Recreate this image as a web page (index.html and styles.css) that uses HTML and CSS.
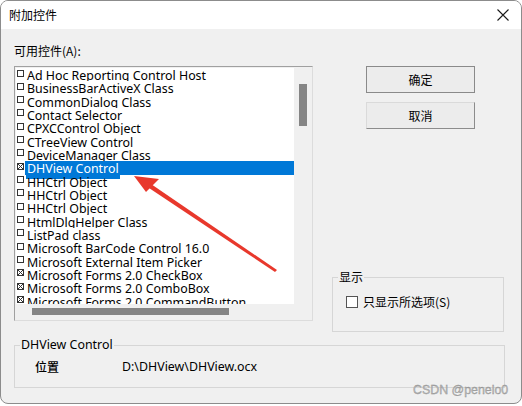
FILE: index.html
```html
<!DOCTYPE html>
<html>
<head>
<meta charset="utf-8">
<link rel="stylesheet" href="styles.css">
</head>
<body>
<div class="window">
  <div class="titlebar">
    <span class="title">附加控件</span>
    <svg class="close" width="12" height="12" viewBox="0 0 12 12"><path d="M0.5 0.5 L11.5 11.5 M11.5 0.5 L0.5 11.5" stroke="#1a1a1a" stroke-width="1.1" fill="none"/></svg>
  </div>
  <div class="content">
    <div class="top">
      <div class="left">
        <div class="caption">可用控件(A):</div>
        <div class="listbox">
          <div class="list">
            <div class="item"><span class="cb"></span><span class="txt">Ad Hoc Reporting Control Host</span></div>
            <div class="item"><span class="cb"></span><span class="txt">BusinessBarActiveX Class</span></div>
            <div class="item"><span class="cb"></span><span class="txt">CommonDialog Class</span></div>
            <div class="item"><span class="cb"></span><span class="txt">Contact Selector</span></div>
            <div class="item"><span class="cb"></span><span class="txt">CPXCControl Object</span></div>
            <div class="item"><span class="cb"></span><span class="txt">CTreeView Control</span></div>
            <div class="item"><span class="cb"></span><span class="txt">DeviceManager Class</span></div>
            <div class="item sel"><span class="cb on"></span><span class="txt">DHView Control</span></div>
            <div class="item"><span class="cb"></span><span class="txt">HHCtrl Object</span></div>
            <div class="item"><span class="cb"></span><span class="txt">HHCtrl Object</span></div>
            <div class="item"><span class="cb"></span><span class="txt">HHCtrl Object</span></div>
            <div class="item"><span class="cb"></span><span class="txt">HtmlDlgHelper Class</span></div>
            <div class="item"><span class="cb"></span><span class="txt">ListPad class</span></div>
            <div class="item"><span class="cb"></span><span class="txt">Microsoft BarCode Control 16.0</span></div>
            <div class="item"><span class="cb"></span><span class="txt">Microsoft External Item Picker</span></div>
            <div class="item"><span class="cb on"></span><span class="txt">Microsoft Forms 2.0 CheckBox</span></div>
            <div class="item"><span class="cb on"></span><span class="txt">Microsoft Forms 2.0 ComboBox</span></div>
            <div class="item"><span class="cb on"></span><span class="txt">Microsoft Forms 2.0 CommandButton</span></div>
          </div>
          <div class="vscroll"><div class="vthumb"></div></div>
          <div class="hscroll"><div class="hthumb"></div></div>
          <div class="corner"></div>
        </div>
      </div>
      <div class="right">
        <button class="btn default">确定</button>
        <button class="btn">取消</button>
        <fieldset class="group show">
          <legend>显示</legend>
          <label class="check"><span class="box"></span><span>只显示所选项(S)</span></label>
        </fieldset>
      </div>
    </div>
    <fieldset class="group info">
      <legend>DHView Control</legend>
      <div class="inforow"><span class="key">位置</span><span class="val">D:\DHView\DHView.ocx</span></div>
    </fieldset>
  </div>
</div>
<svg class="arrow" width="522" height="406" viewBox="0 0 522 406">
  <polygon points="151,184 277,270 275,272 149,188" fill="#e8382c"/>
  <polygon points="134,176 159,179 146,192" fill="#e8382c"/>
</svg>
<div class="watermark">CSDN @penelo0</div>
</body>
</html>
```
FILE: styles.css
```css
html, body {
  margin: 0;
  padding: 0;
  background: #ffffff;
}
body {
  position: relative;
  width: 522px;
  height: 406px;
  overflow: hidden;
  font-family: "Noto Sans", "Noto Sans CJK SC", sans-serif;
  color: #000;
}
.window {
  box-sizing: border-box;
  width: 522px;
  height: 404px;
  border: 1px solid #8c8c8c;
  border-radius: 8px;
  background: #f0f0f0;
  overflow: hidden;
}
.titlebar {
  height: 28px;
  background: #ffffff;
  display: flex;
  align-items: center;
  padding: 0 12px 0 8px;
}
.title {
  font-family: "Noto Sans CJK SC", sans-serif;
  font-size: 12px;
  line-height: 16px;
}
.close {
  margin-left: auto;
  display: block;
}
.content {
  padding: 14px 0 0 13px;
}
.top {
  display: flex;
}
.left {
  width: 299px;
}
.caption {
  font-family: "Noto Sans CJK SC", sans-serif;
  font-size: 12px;
  line-height: 16px;
  margin-bottom: 7px;
}
.listbox {
  box-sizing: border-box;
  width: 299px;
  height: 255px;
  border: 1px solid;
  border-color: #a0a0a0 #dcdcdc #dcdcdc #a0a0a0;
  padding: 1px 0 0 1px;
  display: grid;
  grid-template-columns: 278px 18px;
  grid-template-rows: 236px 16px;
}
.list {
  background: #ffffff;
  overflow: hidden;
}
.item {
  height: 13.33px;
  line-height: 13.33px;
  font-size: 12.4px;
  display: flex;
  align-items: flex-start;
  padding-left: 1px;
  overflow: hidden;
  white-space: nowrap;
}
.txt {
  position: relative;
  top: 1px;
}
.cb {
  box-sizing: border-box;
  width: 7px;
  height: 7px;
  margin-top: 1.5px;
  margin-right: 3px;
  border: 1px solid #333;
  flex: none;
}
.cb.on {
  background:
    linear-gradient(45deg, transparent 42%, #333 42%, #333 58%, transparent 58%),
    linear-gradient(-45deg, transparent 42%, #333 42%, #333 58%, transparent 58%);
}
.item.sel {
  overflow: visible;
  background: linear-gradient(to right, transparent 9px, #0078d7 9px);
}
.item.sel .txt {
  color: #ffffff;
  background: #0078d7;
  padding: 0 1px 3px 1px;
  margin-left: -1px;
}
.vscroll {
  background: #f0f0f0;
  padding: 16px 0 0 5px;
}
.vthumb {
  width: 8px;
  height: 42px;
  background: #858585;
}
.hscroll {
  background: #f0f0f0;
  padding: 4px 0 0 16px;
}
.hthumb {
  width: 197px;
  height: 7px;
  background: #858585;
}
.corner {
  background: #f0f0f0;
}
.right {
  width: 172px;
  margin-left: 19px;
  padding-top: 23px;
  display: flex;
  flex-direction: column;
  align-items: flex-start;
}
.btn {
  box-sizing: border-box;
  width: 109px;
  height: 27px;
  margin: 0 0 0 34px;
  padding: 0;
  background: #ececec;
  border: 1px solid;
  border-color: #dadada #8c8c8c #8c8c8c #dadada;
  font-family: "Noto Sans CJK SC", sans-serif;
  font-size: 12px;
  color: #000;
}
.btn.default {
  border-color: #8a8a8a;
}
.btn + .btn {
  margin-top: 9px;
}
.group {
  box-sizing: border-box;
  margin: 0;
  padding: 0;
  border: 1px solid #d6d6d6;
  min-inline-size: 0;
}
.group legend {
  margin-left: 5px;
  padding: 0 1px;
  font-size: 12.4px;
  line-height: 16px;
}
.show {
  width: 172px;
  height: 63px;
  margin-top: 140px;
}
.show legend {
  font-family: "Noto Sans CJK SC", sans-serif;
  font-size: 12px;
}
.check {
  display: flex;
  align-items: center;
  margin: 9px 0 0 13px;
  font-family: "Noto Sans CJK SC", sans-serif;
  font-size: 12px;
  line-height: 16px;
}
.box {
  box-sizing: border-box;
  width: 12px;
  height: 12px;
  border: 1px solid #555;
  background: #ffffff;
  margin-right: 5px;
}
.info {
  width: 491px;
  height: 51px;
  margin-top: 5px;
}
.inforow {
  display: flex;
  margin: 6px 0 0 20px;
  font-size: 12.4px;
  line-height: 16px;
}
.key {
  width: 87px;
  font-family: "Noto Sans CJK SC", sans-serif;
  font-size: 12px;
  font-weight: 500;
}
.val {
  font-family: "Noto Sans", sans-serif;
}
.arrow {
  position: absolute;
  left: 0;
  top: 0;
  pointer-events: none;
}
.watermark {
  position: absolute;
  left: 413px;
  top: 381px;
  font-family: "Liberation Sans", sans-serif;
  font-size: 12.4px;
  line-height: 18px;
  color: #b8b8b8;
  -webkit-text-stroke: 0.3px #8a8a8a;
}
```
